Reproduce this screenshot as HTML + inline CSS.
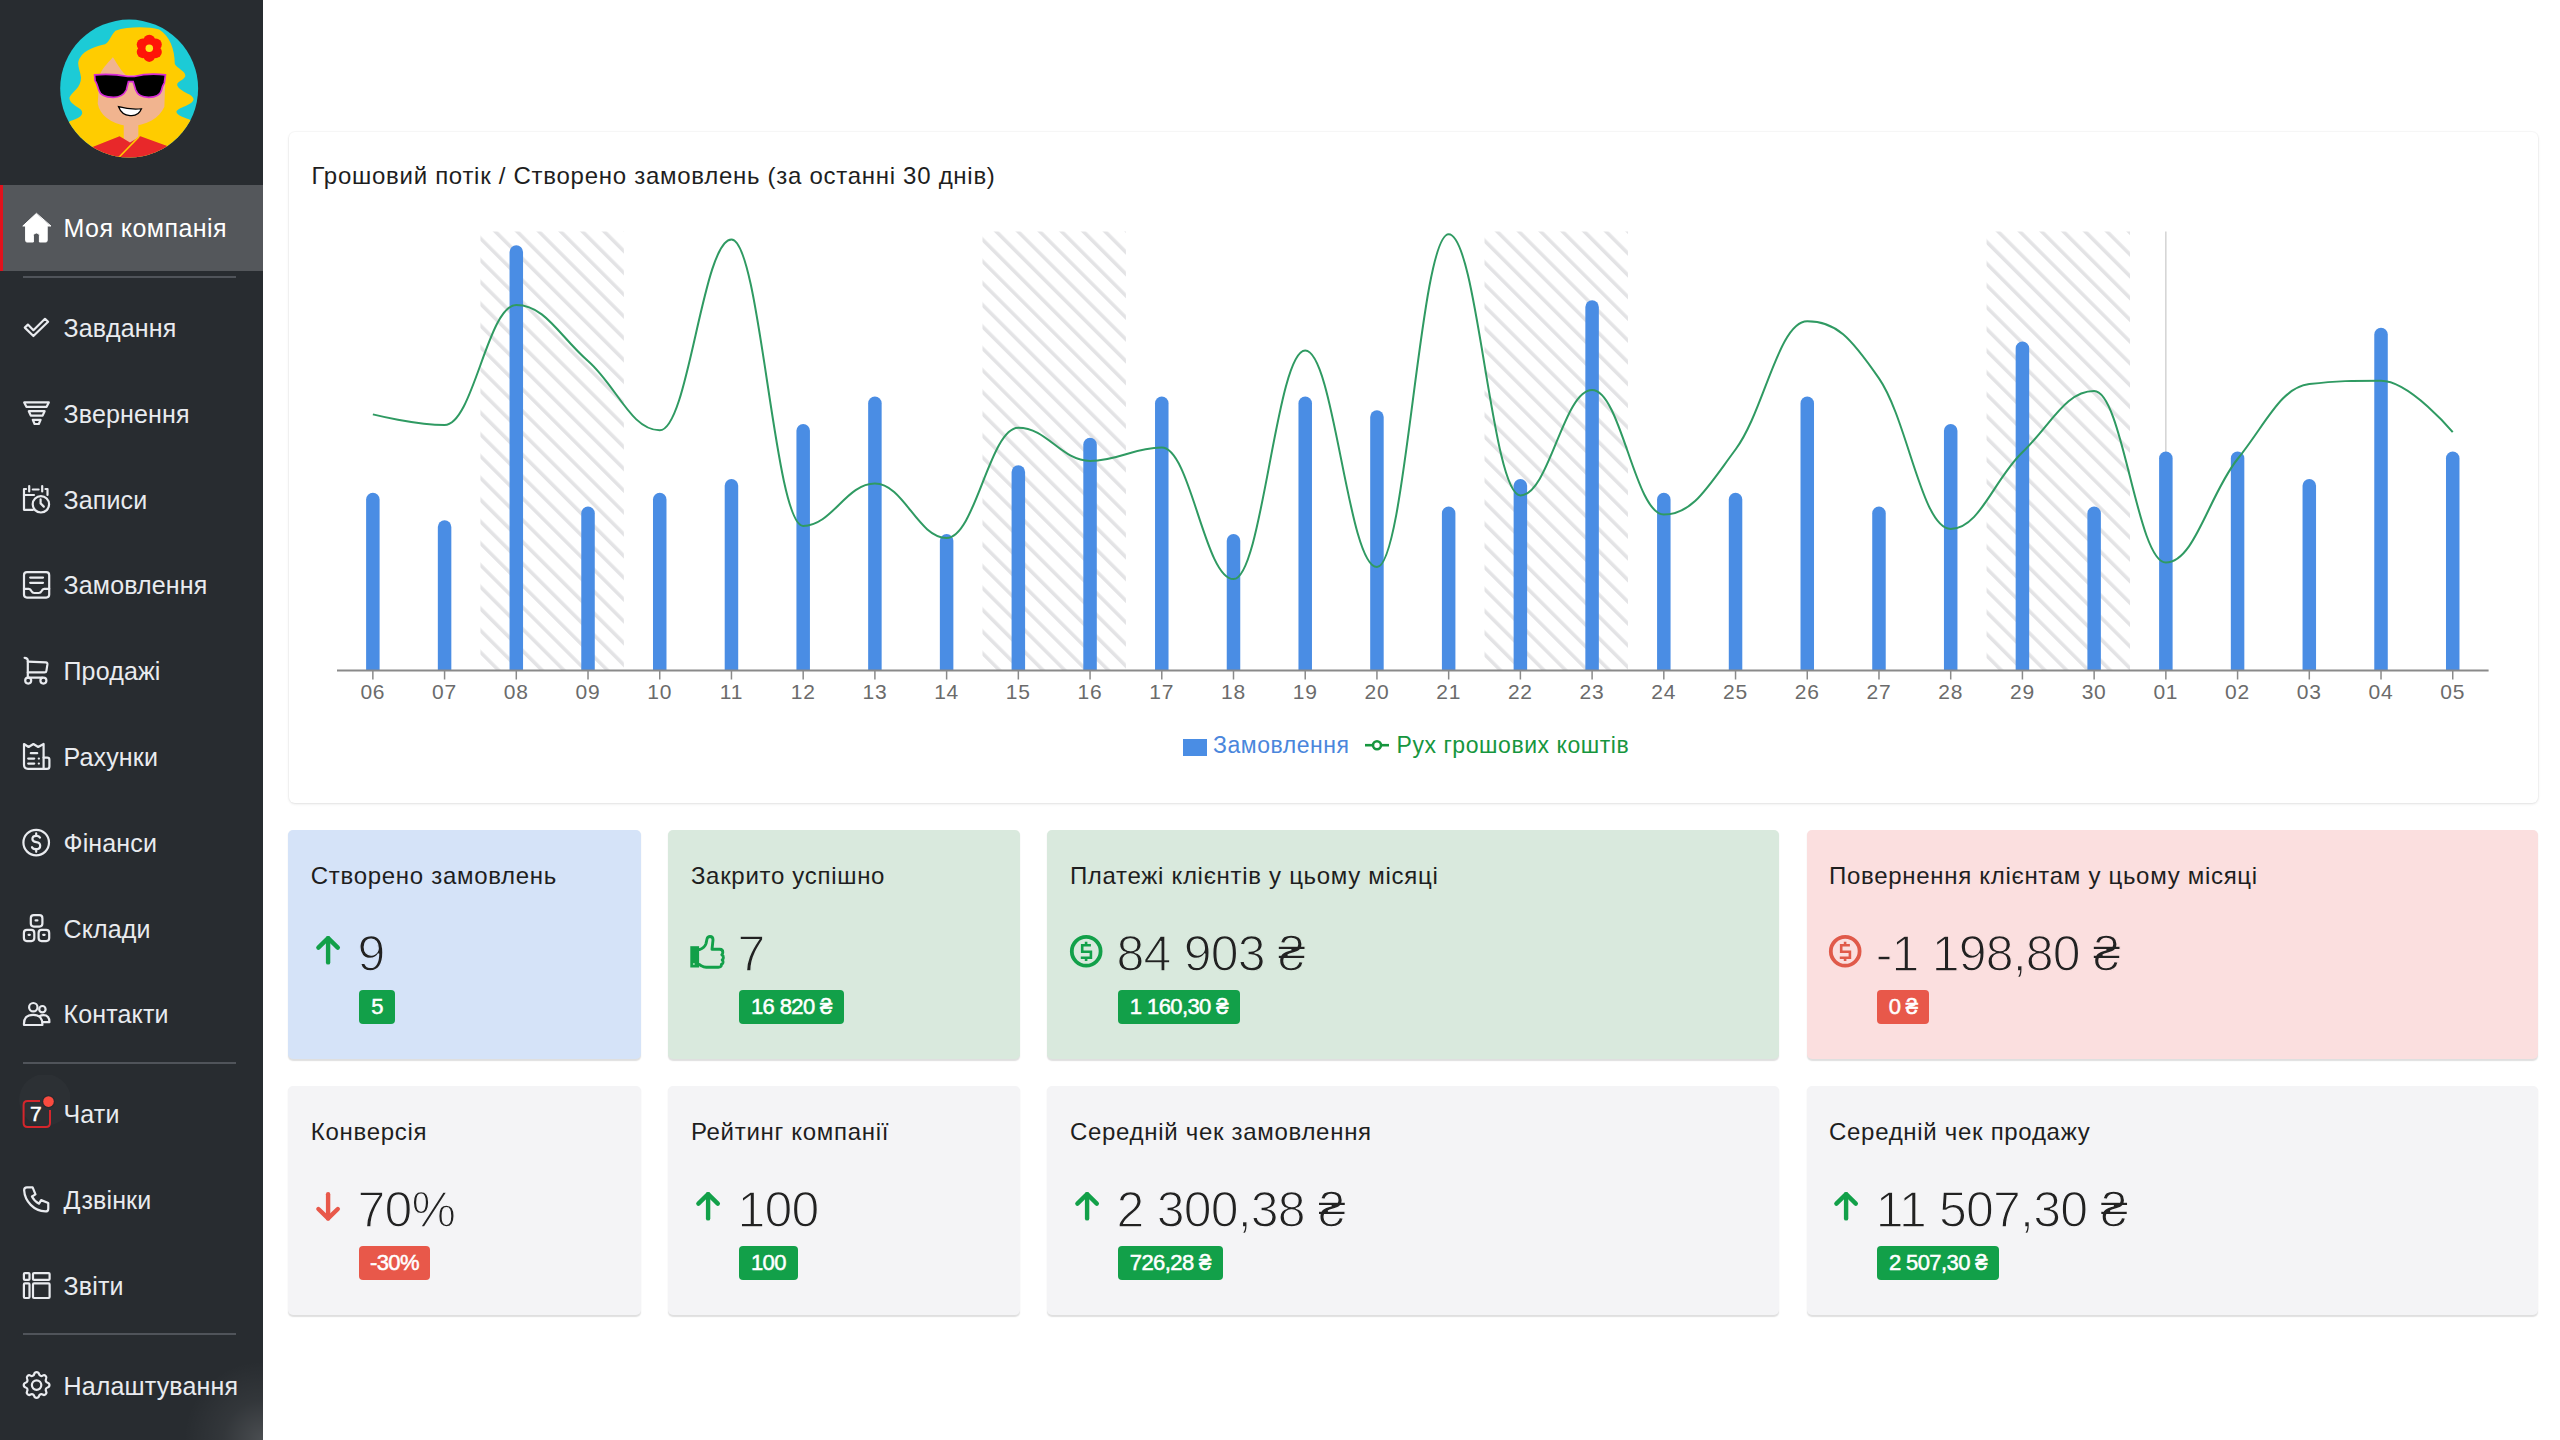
<!DOCTYPE html>
<html lang="uk"><head><meta charset="utf-8"><title>Dashboard</title><style>
*{box-sizing:border-box;margin:0;padding:0}
html,body{width:2560px;height:1440px;overflow:hidden;background:#fff;font-family:"Liberation Sans", sans-serif}
.sb{position:absolute;left:0;top:0;width:263px;height:1440px;background:#282c30;overflow:hidden}
.act{position:absolute;left:0;top:184.5px;width:263px;height:86.3px;background:#54575b;border-left:3px solid #e0121c}
.mi{position:absolute;left:63.5px;font-size:25px;line-height:30px;color:#e9ebef;white-space:nowrap;letter-spacing:0.15px}
.sep{position:absolute;left:23px;width:213px;height:1.6px;background:#50545a}
.ic{position:absolute}
.card{position:absolute;border-radius:6px}
.chartcard{left:288.5px;top:131.5px;width:2249px;height:671px;background:#fff;box-shadow:0 1px 3px rgba(0,0,0,0.10),0 0 0 1px rgba(0,0,0,0.025)}
.ctitle{position:absolute;left:311.5px;top:161px;font-size:24px;line-height:30px;color:#1e1e1e;letter-spacing:0.72px;white-space:nowrap}
.leg{position:absolute;top:730px;font-size:23px;line-height:30px;letter-spacing:0.55px;white-space:nowrap}
.st{position:absolute;border-radius:5px;box-shadow:0 1.5px 1.2px rgba(0,0,0,0.13)}
.t{position:absolute;font-size:24px;line-height:30px;color:#1e1e1e;letter-spacing:0.7px;white-space:nowrap}
.n{position:absolute;font-size:50px;line-height:60px;color:#222;letter-spacing:-0.8px;white-space:nowrap;-webkit-text-stroke:1.3px var(--bg)}
.b{position:absolute;height:34.5px;border-radius:4px;color:#fff;font-size:22px;font-weight:400;line-height:34.5px;letter-spacing:-0.6px;white-space:nowrap;text-align:center;-webkit-text-stroke:0.5px #fff}
.g{background:#12a049} .r{background:#e8584a}
</style></head><body>
<div class="sb">
<svg style="position:absolute;left:55px;top:15px" width="150" height="150" viewBox="0 0 1440 1440">
<defs><clipPath id="avc"><circle cx="712" cy="706" r="662"/></clipPath></defs>
<circle cx="712" cy="706" r="662" fill="#1ccbd6"/>
<g clip-path="url(#avc)">
<path d="M580,150 C700,110 900,110 1000,140 C1100,200 1150,330 1150,470 C1180,520 1260,540 1250,590 C1230,630 1160,640 1175,680 C1200,740 1330,760 1330,810 C1320,870 1180,880 1165,930 C1180,980 1300,990 1310,1020 L1500,1500 L-100,1500 L140,1020 C250,990 280,950 250,910 C200,870 130,840 140,790 C170,730 250,700 250,600 C240,520 200,470 240,410 C280,330 400,300 480,280 C520,260 540,190 580,150 Z" fill="#ffcc00"/>
<path d="M555,405 C500,470 440,520 425,600 L410,850 C430,960 530,1040 690,1065 C880,1070 1000,990 1050,880 L1060,580 L680,575 C620,520 590,450 555,405 Z" fill="#f1b48f"/>
<rect x="660" y="1000" width="140" height="230" fill="#f1b48f"/>
<path d="M330,1280 L620,1165 L720,1225 L820,1165 L1110,1270 L1200,1500 L300,1500 Z" fill="#e8282a"/>
<path d="M805,1170 L600,1380" stroke="#ffcc00" stroke-width="14"/>
</g>
<path d="M380,575 Q540,560 700,590 L760,590 Q900,555 1060,575 L1050,650 Q1030,680 1020,730 Q1000,790 900,790 Q800,790 775,720 L750,640 L705,640 L685,720 Q650,790 560,790 Q440,790 420,720 Q400,650 385,630 Z" fill="#000" stroke="#d62ad6" stroke-width="16"/>
<path d="M610,880 Q720,910 830,900 Q800,975 720,965 Q640,960 610,880 Z" fill="#fff" stroke="#000" stroke-width="12"/>
<circle cx="967.4" cy="356.0" r="58" fill="#ff1408"/><circle cx="905.0" cy="392.0" r="58" fill="#ff1408"/><circle cx="842.6" cy="356.0" r="58" fill="#ff1408"/><circle cx="842.6" cy="284.0" r="58" fill="#ff1408"/><circle cx="905.0" cy="248.0" r="58" fill="#ff1408"/><circle cx="967.4" cy="284.0" r="58" fill="#ff1408"/>
<circle cx="905" cy="320" r="36" fill="#ffe51a"/>
</svg>
<div class="act"></div>
<div style="position:absolute;left:183px;top:1360px;width:160px;height:160px;border-radius:50%;background:radial-gradient(circle at center, rgba(255,255,255,0.16) 0%, rgba(255,255,255,0.05) 35%, rgba(255,255,255,0) 70%)"></div>
<div class="mi" style="top:212.9px;color:#fff;letter-spacing:0.45px">Моя компанія</div>
<svg class="ic" style="left:15px;top:205px" width="45" height="45" viewBox="15 205 45 45" fill="none" stroke="#e9ebef" stroke-width="2.2" stroke-linejoin="round" stroke-linecap="round"><path d="M36.2,213.6 L22.8,226 L25.6,226 L25.6,240.6 Q25.6,242 27,242 L33.4,242 L33.4,235.5 Q33.4,233 36.4,233 Q39.4,233 39.4,235.5 L39.4,242 L45.8,242 Q47.2,242 47.2,240.6 L47.2,226 L50.6,226 Z" fill="#ffffff" stroke="#ffffff" stroke-width="1"/></svg>
<div class="mi" style="top:313.0px;">Завдання</div>
<svg class="ic" style="left:15px;top:305px" width="45" height="45" viewBox="15 305 45 45" fill="none" stroke="#e9ebef" stroke-width="2.2" stroke-linejoin="round" stroke-linecap="round"><path d="M24.8,327.6 L27.9,324.6 L33.4,330.2 L45,318.8 L48.1,321.7 L33.4,336 Z"/></svg>
<div class="mi" style="top:398.8px;">Звернення</div>
<svg class="ic" style="left:15px;top:390px" width="45" height="45" viewBox="15 390 45 45" fill="none" stroke="#e9ebef" stroke-width="2.2" stroke-linejoin="round" stroke-linecap="round"><path d="M24.2,402.4 L48.8,402.4 L46.6,406.8 L26.4,406.8 Z"/><path d="M28.8,411.2 L44.6,411.2 L42.6,415.6 L30.8,415.6 Z"/><path d="M32.8,419.8 L40.6,419.8 L38.8,424 L34.6,424 Z"/></svg>
<div class="mi" style="top:484.6px;">Записи</div>
<svg class="ic" style="left:15px;top:475px" width="45" height="45" viewBox="15 475 45 45" fill="none" stroke="#e9ebef" stroke-width="2.2" stroke-linejoin="round" stroke-linecap="round"><path d="M26,489 L24,489 L24,509.8 L33,509.8"/><path d="M45.5,489 L47.5,489 L47.5,495"/><path d="M24,495 L34,495"/><path d="M29.2,486 L29.2,491.5"/><path d="M42.2,486 L42.2,491.5"/><path d="M32.8,489.5 L38.6,489.5"/><circle cx="40.9" cy="504.3" r="8.2"/><path d="M40.6,499.4 L40.6,503.4 L43.8,506.6"/></svg>
<div class="mi" style="top:570.4px;">Замовлення</div>
<svg class="ic" style="left:15px;top:562px" width="45" height="45" viewBox="15 562 45 45" fill="none" stroke="#e9ebef" stroke-width="2.2" stroke-linejoin="round" stroke-linecap="round"><rect x="24" y="572.2" width="25.2" height="25.4" rx="3"/><path d="M30.2,577.6 L43,577.6"/><path d="M30.2,582.8 L43,582.8"/><path d="M24,588.8 L28.8,588.8 Q30.4,588.8 31.4,591 Q32.4,593 34.2,593 L38.8,593 Q40.6,593 41.6,591 Q42.6,588.8 44.2,588.8 L49.2,588.8"/></svg>
<div class="mi" style="top:656.2px;">Продажі</div>
<svg class="ic" style="left:15px;top:648px" width="45" height="45" viewBox="15 648 45 45" fill="none" stroke="#e9ebef" stroke-width="2.2" stroke-linejoin="round" stroke-linecap="round"><path d="M24.6,657.8 Q27.6,657.8 27.8,660.4 L27.8,677.6"/><path d="M27.8,661.6 L45.8,662.4 Q47.6,662.6 47.4,664.4 L46.4,670.8 Q46.2,672.4 44.6,672.4 L27.8,672.4"/><path d="M27.8,677.6 L42.2,677.6"/><circle cx="28.2" cy="680.6" r="3"/><circle cx="43.4" cy="680.6" r="3"/></svg>
<div class="mi" style="top:742.0px;">Рахунки</div>
<svg class="ic" style="left:15px;top:733px" width="45" height="45" viewBox="15 733 45 45" fill="none" stroke="#e9ebef" stroke-width="2.2" stroke-linejoin="round" stroke-linecap="round"><path d="M24,744 L28.6,747 L33.4,744 L38.2,747 L43.6,744 L43.6,768.8 L28,768.8 Q24,768.8 24,764.8 Z"/><path d="M43.6,757.6 L47.2,757.6 Q49.4,757.6 49.4,759.8 L49.4,766.4 Q49.4,768.8 47,768.8 L43.6,768.8"/><path d="M30.8,753.2 L37.2,753.2"/><path d="M28.2,758.6 L34.2,758.6"/><path d="M28.2,763.6 L34.2,763.6"/><path d="M38.8,758.6 L38.9,758.6"/><path d="M38.8,763.6 L38.9,763.6"/></svg>
<div class="mi" style="top:827.8px;">Фінанси</div>
<svg class="ic" style="left:15px;top:820px" width="45" height="45" viewBox="15 820 45 45" fill="none" stroke="#e9ebef" stroke-width="2.2" stroke-linejoin="round" stroke-linecap="round"><circle cx="36.2" cy="842.6" r="12.8"/><path d="M40,837.6 Q39,835.8 36.2,835.8 Q32.4,835.8 32.4,839 Q32.4,841.6 36.2,842.2 Q40.2,842.8 40.2,845.8 Q40.2,849.2 36.2,849.2 Q33,849.2 32,847.2"/><path d="M36.2,833.4 L36.2,835.8"/><path d="M36.2,849.2 L36.2,851.8"/></svg>
<div class="mi" style="top:913.6px;">Склади</div>
<svg class="ic" style="left:15px;top:905px" width="45" height="45" viewBox="15 905 45 45" fill="none" stroke="#e9ebef" stroke-width="2.2" stroke-linejoin="round" stroke-linecap="round"><rect x="30.8" y="915.2" width="11.6" height="11.4" rx="3"/><rect x="23.9" y="929.9" width="10.4" height="11.2" rx="3"/><rect x="38.6" y="929.9" width="10.6" height="11.2" rx="3"/><path d="M35.6,920.4 L37.4,920.4"/><path d="M28.6,934.8 L29.8,934.8"/><path d="M43.2,934.8 L44.6,934.8"/></svg>
<div class="mi" style="top:999.4px;">Контакти</div>
<svg class="ic" style="left:15px;top:990px" width="45" height="45" viewBox="15 990 45 45" fill="none" stroke="#e9ebef" stroke-width="2.2" stroke-linejoin="round" stroke-linecap="round"><circle cx="33.3" cy="1007.2" r="4.2"/><circle cx="42.4" cy="1009.2" r="3.2"/><path d="M24,1025 Q23.4,1014.8 33.2,1014.8 Q42.6,1014.8 42.4,1025 Z"/><path d="M39.6,1016.2 Q41.2,1015.2 43.4,1015.2 Q49.6,1015.2 49.4,1022.2 L43,1022.2"/></svg>
<div class="mi" style="top:1099.2px;">Чати</div>
<svg class="ic" style="left:10px;top:1075px" width="60" height="60" viewBox="10 1075 60 60"><circle cx="45" cy="1100" r="26" fill="#ffffff" fill-opacity="0.018"/><path d="M40,1101 L27.5,1101 Q23.6,1101 23.6,1105 L23.6,1123 Q23.6,1127 27.5,1127 L46,1127 Q50,1127 50,1123 L50,1110" fill="none" stroke="#d4262c" stroke-width="2"/><circle cx="48.5" cy="1101.6" r="6.6" fill="#272a2f"/><circle cx="48.5" cy="1101.6" r="5.3" fill="#f94b3f"/><text x="35.8" y="1121.4" text-anchor="middle" font-family="Liberation Sans" font-size="21" fill="#ffffff" stroke="#ffffff" stroke-width="0.5">7</text></svg>
<div class="mi" style="top:1185.0px;">Дзвінки</div>
<svg class="ic" style="left:15px;top:1175px" width="45" height="45" viewBox="15 1175 45 45" fill="none" stroke="#e9ebef" stroke-width="2.2" stroke-linejoin="round" stroke-linecap="round"><g transform="translate(19.86,1181.65) scale(1.42)" stroke-width="1.55"><path d="M5 4h4l2 5l-2.5 1.5a11 11 0 0 0 5 5l1.5 -2.5l5 2v4a2 2 0 0 1 -2 2a16 16 0 0 1 -15 -15a2 2 0 0 1 2 -2"/></g></svg>
<div class="mi" style="top:1270.8px;">Звіти</div>
<svg class="ic" style="left:15px;top:1262px" width="45" height="45" viewBox="15 1262 45 45" fill="none" stroke="#e9ebef" stroke-width="2.2" stroke-linejoin="round" stroke-linecap="round"><rect x="23.9" y="1273.1" width="5.6" height="6.8" rx="1"/><rect x="33" y="1273.1" width="16.6" height="6.8" rx="1"/><rect x="23.9" y="1283.4" width="5.6" height="14.6" rx="1"/><rect x="33" y="1283.4" width="16.6" height="14.6" rx="1"/></svg>
<div class="mi" style="top:1370.6px;">Налаштування</div>
<svg class="ic" style="left:15px;top:1362px" width="45" height="45" viewBox="15 1362 45 45" fill="none" stroke="#e9ebef" stroke-width="2.2" stroke-linejoin="round" stroke-linecap="round"><g transform="translate(19.44,1367.94) scale(1.43)" stroke-width="1.55"><path d="M10.325 4.317c.426 -1.756 2.924 -1.756 3.35 0a1.724 1.724 0 0 0 2.573 1.066c1.543 -.94 3.310 .826 2.370 2.370a1.724 1.724 0 0 0 1.065 2.572c1.756 .426 1.756 2.924 0 3.350a1.724 1.724 0 0 0 -1.066 2.573c.940 1.543 -.826 3.310 -2.370 2.370a1.724 1.724 0 0 0 -2.572 1.065c-.426 1.756 -2.924 1.756 -3.350 0a1.724 1.724 0 0 0 -2.573 -1.066c-1.543 .940 -3.310 -.826 -2.370 -2.370a1.724 1.724 0 0 0 -1.065 -2.572c-1.756 -.426 -1.756 -2.924 0 -3.350a1.724 1.724 0 0 0 1.066 -2.573c-.940 -1.543 .826 -3.310 2.370 -2.370c1 .608 2.296 .070 2.572 -1.065z"/><path d="M8.7 12a3.3 3.3 0 1 0 6.6 0a3.3 3.3 0 0 0 -6.6 0"/></g></svg>
<div class="sep" style="top:276px"></div>
<div class="sep" style="top:1062px"></div>
<div class="sep" style="top:1333px"></div>
</div>
<div class="card chartcard">
<div style="position:absolute;left:0;top:0;width:2249px;height:671px;overflow:hidden"><svg width="2249" height="671" viewBox="288.5 131.5 2249 671" style="position:absolute;left:0;top:0">
<defs><pattern id="hp" patternUnits="userSpaceOnUse" width="15.4" height="15.4" patternTransform="rotate(-45)"><rect x="0" y="0" width="3.5" height="15.4" fill="#e3e3e5"/></pattern></defs>
<rect x="479.94" y="231" width="143.44" height="439" fill="url(#hp)"/>
<rect x="981.98" y="231" width="143.44" height="439" fill="url(#hp)"/>
<rect x="1484.02" y="231" width="143.44" height="439" fill="url(#hp)"/>
<rect x="1986.06" y="231" width="143.44" height="439" fill="url(#hp)"/>
<line x1="2165.36" y1="231" x2="2165.36" y2="670" stroke="#c8c8c8" stroke-width="1.2"/>
<path d="M365.61,670 L365.61,499.00 A6.75,6.75 0 0 1 379.11,499.00 L379.11,670 Z" fill="#4a8de4"/>
<path d="M437.33,670 L437.33,526.50 A6.75,6.75 0 0 1 450.83,526.50 L450.83,670 Z" fill="#4a8de4"/>
<path d="M509.05,670 L509.05,251.50 A6.75,6.75 0 0 1 522.55,251.50 L522.55,670 Z" fill="#4a8de4"/>
<path d="M580.77,670 L580.77,512.75 A6.75,6.75 0 0 1 594.27,512.75 L594.27,670 Z" fill="#4a8de4"/>
<path d="M652.49,670 L652.49,499.00 A6.75,6.75 0 0 1 665.99,499.00 L665.99,670 Z" fill="#4a8de4"/>
<path d="M724.21,670 L724.21,485.25 A6.75,6.75 0 0 1 737.71,485.25 L737.71,670 Z" fill="#4a8de4"/>
<path d="M795.93,670 L795.93,430.25 A6.75,6.75 0 0 1 809.43,430.25 L809.43,670 Z" fill="#4a8de4"/>
<path d="M867.65,670 L867.65,402.75 A6.75,6.75 0 0 1 881.15,402.75 L881.15,670 Z" fill="#4a8de4"/>
<path d="M939.37,670 L939.37,540.25 A6.75,6.75 0 0 1 952.87,540.25 L952.87,670 Z" fill="#4a8de4"/>
<path d="M1011.09,670 L1011.09,471.50 A6.75,6.75 0 0 1 1024.59,471.50 L1024.59,670 Z" fill="#4a8de4"/>
<path d="M1082.81,670 L1082.81,444.00 A6.75,6.75 0 0 1 1096.31,444.00 L1096.31,670 Z" fill="#4a8de4"/>
<path d="M1154.53,670 L1154.53,402.75 A6.75,6.75 0 0 1 1168.03,402.75 L1168.03,670 Z" fill="#4a8de4"/>
<path d="M1226.25,670 L1226.25,540.25 A6.75,6.75 0 0 1 1239.75,540.25 L1239.75,670 Z" fill="#4a8de4"/>
<path d="M1297.97,670 L1297.97,402.75 A6.75,6.75 0 0 1 1311.47,402.75 L1311.47,670 Z" fill="#4a8de4"/>
<path d="M1369.69,670 L1369.69,416.50 A6.75,6.75 0 0 1 1383.19,416.50 L1383.19,670 Z" fill="#4a8de4"/>
<path d="M1441.41,670 L1441.41,512.75 A6.75,6.75 0 0 1 1454.91,512.75 L1454.91,670 Z" fill="#4a8de4"/>
<path d="M1513.13,670 L1513.13,485.25 A6.75,6.75 0 0 1 1526.63,485.25 L1526.63,670 Z" fill="#4a8de4"/>
<path d="M1584.85,670 L1584.85,306.50 A6.75,6.75 0 0 1 1598.35,306.50 L1598.35,670 Z" fill="#4a8de4"/>
<path d="M1656.57,670 L1656.57,499.00 A6.75,6.75 0 0 1 1670.07,499.00 L1670.07,670 Z" fill="#4a8de4"/>
<path d="M1728.29,670 L1728.29,499.00 A6.75,6.75 0 0 1 1741.79,499.00 L1741.79,670 Z" fill="#4a8de4"/>
<path d="M1800.01,670 L1800.01,402.75 A6.75,6.75 0 0 1 1813.51,402.75 L1813.51,670 Z" fill="#4a8de4"/>
<path d="M1871.73,670 L1871.73,512.75 A6.75,6.75 0 0 1 1885.23,512.75 L1885.23,670 Z" fill="#4a8de4"/>
<path d="M1943.45,670 L1943.45,430.25 A6.75,6.75 0 0 1 1956.95,430.25 L1956.95,670 Z" fill="#4a8de4"/>
<path d="M2015.17,670 L2015.17,347.75 A6.75,6.75 0 0 1 2028.67,347.75 L2028.67,670 Z" fill="#4a8de4"/>
<path d="M2086.89,670 L2086.89,512.75 A6.75,6.75 0 0 1 2100.39,512.75 L2100.39,670 Z" fill="#4a8de4"/>
<path d="M2158.61,670 L2158.61,457.75 A6.75,6.75 0 0 1 2172.11,457.75 L2172.11,670 Z" fill="#4a8de4"/>
<path d="M2230.33,670 L2230.33,457.75 A6.75,6.75 0 0 1 2243.83,457.75 L2243.83,670 Z" fill="#4a8de4"/>
<path d="M2302.05,670 L2302.05,485.25 A6.75,6.75 0 0 1 2315.55,485.25 L2315.55,670 Z" fill="#4a8de4"/>
<path d="M2373.77,670 L2373.77,334.00 A6.75,6.75 0 0 1 2387.27,334.00 L2387.27,670 Z" fill="#4a8de4"/>
<path d="M2445.49,670 L2445.49,457.75 A6.75,6.75 0 0 1 2458.99,457.75 L2458.99,670 Z" fill="#4a8de4"/>
<line x1="336.5" y1="670" x2="2488.10" y2="670" stroke="#8a8a8a" stroke-width="2"/>
<line x1="372.36" y1="670" x2="372.36" y2="679" stroke="#8a8a8a" stroke-width="1.5"/>
<line x1="444.08" y1="670" x2="444.08" y2="679" stroke="#8a8a8a" stroke-width="1.5"/>
<line x1="515.80" y1="670" x2="515.80" y2="679" stroke="#8a8a8a" stroke-width="1.5"/>
<line x1="587.52" y1="670" x2="587.52" y2="679" stroke="#8a8a8a" stroke-width="1.5"/>
<line x1="659.24" y1="670" x2="659.24" y2="679" stroke="#8a8a8a" stroke-width="1.5"/>
<line x1="730.96" y1="670" x2="730.96" y2="679" stroke="#8a8a8a" stroke-width="1.5"/>
<line x1="802.68" y1="670" x2="802.68" y2="679" stroke="#8a8a8a" stroke-width="1.5"/>
<line x1="874.40" y1="670" x2="874.40" y2="679" stroke="#8a8a8a" stroke-width="1.5"/>
<line x1="946.12" y1="670" x2="946.12" y2="679" stroke="#8a8a8a" stroke-width="1.5"/>
<line x1="1017.84" y1="670" x2="1017.84" y2="679" stroke="#8a8a8a" stroke-width="1.5"/>
<line x1="1089.56" y1="670" x2="1089.56" y2="679" stroke="#8a8a8a" stroke-width="1.5"/>
<line x1="1161.28" y1="670" x2="1161.28" y2="679" stroke="#8a8a8a" stroke-width="1.5"/>
<line x1="1233.00" y1="670" x2="1233.00" y2="679" stroke="#8a8a8a" stroke-width="1.5"/>
<line x1="1304.72" y1="670" x2="1304.72" y2="679" stroke="#8a8a8a" stroke-width="1.5"/>
<line x1="1376.44" y1="670" x2="1376.44" y2="679" stroke="#8a8a8a" stroke-width="1.5"/>
<line x1="1448.16" y1="670" x2="1448.16" y2="679" stroke="#8a8a8a" stroke-width="1.5"/>
<line x1="1519.88" y1="670" x2="1519.88" y2="679" stroke="#8a8a8a" stroke-width="1.5"/>
<line x1="1591.60" y1="670" x2="1591.60" y2="679" stroke="#8a8a8a" stroke-width="1.5"/>
<line x1="1663.32" y1="670" x2="1663.32" y2="679" stroke="#8a8a8a" stroke-width="1.5"/>
<line x1="1735.04" y1="670" x2="1735.04" y2="679" stroke="#8a8a8a" stroke-width="1.5"/>
<line x1="1806.76" y1="670" x2="1806.76" y2="679" stroke="#8a8a8a" stroke-width="1.5"/>
<line x1="1878.48" y1="670" x2="1878.48" y2="679" stroke="#8a8a8a" stroke-width="1.5"/>
<line x1="1950.20" y1="670" x2="1950.20" y2="679" stroke="#8a8a8a" stroke-width="1.5"/>
<line x1="2021.92" y1="670" x2="2021.92" y2="679" stroke="#8a8a8a" stroke-width="1.5"/>
<line x1="2093.64" y1="670" x2="2093.64" y2="679" stroke="#8a8a8a" stroke-width="1.5"/>
<line x1="2165.36" y1="670" x2="2165.36" y2="679" stroke="#8a8a8a" stroke-width="1.5"/>
<line x1="2237.08" y1="670" x2="2237.08" y2="679" stroke="#8a8a8a" stroke-width="1.5"/>
<line x1="2308.80" y1="670" x2="2308.80" y2="679" stroke="#8a8a8a" stroke-width="1.5"/>
<line x1="2380.52" y1="670" x2="2380.52" y2="679" stroke="#8a8a8a" stroke-width="1.5"/>
<line x1="2452.24" y1="670" x2="2452.24" y2="679" stroke="#8a8a8a" stroke-width="1.5"/>
<path d="M372.36,413.90 C372.36,413.90 415.39,424.50 444.08,424.50 C472.77,424.50 487.11,304.50 515.80,304.50 C544.49,304.50 558.83,335.44 587.52,360.50 C616.21,385.56 630.55,429.80 659.24,429.80 C687.93,429.80 702.27,239.10 730.96,239.10 C759.65,239.10 773.99,525.40 802.68,525.40 C831.37,525.40 845.71,483.00 874.40,483.00 C903.09,483.00 917.43,537.40 946.12,537.40 C974.81,537.40 989.15,427.20 1017.84,427.20 C1046.53,427.20 1060.87,460.40 1089.56,460.40 C1118.25,460.40 1132.59,447.10 1161.28,447.10 C1189.97,447.10 1204.31,578.60 1233.00,578.60 C1261.69,578.60 1276.03,350.10 1304.72,350.10 C1333.41,350.10 1347.75,566.60 1376.44,566.60 C1405.13,566.60 1419.47,233.80 1448.16,233.80 C1476.85,233.80 1491.19,494.90 1519.88,494.90 C1548.57,494.90 1562.91,389.50 1591.60,389.50 C1620.29,389.50 1634.63,514.00 1663.32,514.00 C1692.01,514.00 1706.35,487.64 1735.04,449.00 C1763.73,410.36 1778.07,320.80 1806.76,320.80 C1835.45,320.80 1849.79,336.38 1878.48,377.90 C1907.17,419.42 1921.51,528.40 1950.20,528.40 C1978.89,528.40 1993.23,479.36 2021.92,451.80 C2050.61,424.24 2064.95,390.60 2093.64,390.60 C2122.33,390.60 2136.67,562.00 2165.36,562.00 C2194.05,562.00 2208.39,494.18 2237.08,458.50 C2265.77,422.82 2280.11,387.00 2308.80,383.60 C2337.49,380.20 2351.83,380.20 2380.52,380.20 C2409.21,380.20 2452.24,431.60 2452.24,431.60" fill="none" stroke="#2f9a62" stroke-width="2"/>
<text x="372.36" y="698" text-anchor="middle" font-family="Liberation Sans" font-size="21" letter-spacing="0.8" fill="#6b6b6b">06</text>
<text x="444.08" y="698" text-anchor="middle" font-family="Liberation Sans" font-size="21" letter-spacing="0.8" fill="#6b6b6b">07</text>
<text x="515.80" y="698" text-anchor="middle" font-family="Liberation Sans" font-size="21" letter-spacing="0.8" fill="#6b6b6b">08</text>
<text x="587.52" y="698" text-anchor="middle" font-family="Liberation Sans" font-size="21" letter-spacing="0.8" fill="#6b6b6b">09</text>
<text x="659.24" y="698" text-anchor="middle" font-family="Liberation Sans" font-size="21" letter-spacing="0.8" fill="#6b6b6b">10</text>
<text x="730.96" y="698" text-anchor="middle" font-family="Liberation Sans" font-size="21" letter-spacing="0.8" fill="#6b6b6b">11</text>
<text x="802.68" y="698" text-anchor="middle" font-family="Liberation Sans" font-size="21" letter-spacing="0.8" fill="#6b6b6b">12</text>
<text x="874.40" y="698" text-anchor="middle" font-family="Liberation Sans" font-size="21" letter-spacing="0.8" fill="#6b6b6b">13</text>
<text x="946.12" y="698" text-anchor="middle" font-family="Liberation Sans" font-size="21" letter-spacing="0.8" fill="#6b6b6b">14</text>
<text x="1017.84" y="698" text-anchor="middle" font-family="Liberation Sans" font-size="21" letter-spacing="0.8" fill="#6b6b6b">15</text>
<text x="1089.56" y="698" text-anchor="middle" font-family="Liberation Sans" font-size="21" letter-spacing="0.8" fill="#6b6b6b">16</text>
<text x="1161.28" y="698" text-anchor="middle" font-family="Liberation Sans" font-size="21" letter-spacing="0.8" fill="#6b6b6b">17</text>
<text x="1233.00" y="698" text-anchor="middle" font-family="Liberation Sans" font-size="21" letter-spacing="0.8" fill="#6b6b6b">18</text>
<text x="1304.72" y="698" text-anchor="middle" font-family="Liberation Sans" font-size="21" letter-spacing="0.8" fill="#6b6b6b">19</text>
<text x="1376.44" y="698" text-anchor="middle" font-family="Liberation Sans" font-size="21" letter-spacing="0.8" fill="#6b6b6b">20</text>
<text x="1448.16" y="698" text-anchor="middle" font-family="Liberation Sans" font-size="21" letter-spacing="0.8" fill="#6b6b6b">21</text>
<text x="1519.88" y="698" text-anchor="middle" font-family="Liberation Sans" font-size="21" letter-spacing="0.8" fill="#6b6b6b">22</text>
<text x="1591.60" y="698" text-anchor="middle" font-family="Liberation Sans" font-size="21" letter-spacing="0.8" fill="#6b6b6b">23</text>
<text x="1663.32" y="698" text-anchor="middle" font-family="Liberation Sans" font-size="21" letter-spacing="0.8" fill="#6b6b6b">24</text>
<text x="1735.04" y="698" text-anchor="middle" font-family="Liberation Sans" font-size="21" letter-spacing="0.8" fill="#6b6b6b">25</text>
<text x="1806.76" y="698" text-anchor="middle" font-family="Liberation Sans" font-size="21" letter-spacing="0.8" fill="#6b6b6b">26</text>
<text x="1878.48" y="698" text-anchor="middle" font-family="Liberation Sans" font-size="21" letter-spacing="0.8" fill="#6b6b6b">27</text>
<text x="1950.20" y="698" text-anchor="middle" font-family="Liberation Sans" font-size="21" letter-spacing="0.8" fill="#6b6b6b">28</text>
<text x="2021.92" y="698" text-anchor="middle" font-family="Liberation Sans" font-size="21" letter-spacing="0.8" fill="#6b6b6b">29</text>
<text x="2093.64" y="698" text-anchor="middle" font-family="Liberation Sans" font-size="21" letter-spacing="0.8" fill="#6b6b6b">30</text>
<text x="2165.36" y="698" text-anchor="middle" font-family="Liberation Sans" font-size="21" letter-spacing="0.8" fill="#6b6b6b">01</text>
<text x="2237.08" y="698" text-anchor="middle" font-family="Liberation Sans" font-size="21" letter-spacing="0.8" fill="#6b6b6b">02</text>
<text x="2308.80" y="698" text-anchor="middle" font-family="Liberation Sans" font-size="21" letter-spacing="0.8" fill="#6b6b6b">03</text>
<text x="2380.52" y="698" text-anchor="middle" font-family="Liberation Sans" font-size="21" letter-spacing="0.8" fill="#6b6b6b">04</text>
<text x="2452.24" y="698" text-anchor="middle" font-family="Liberation Sans" font-size="21" letter-spacing="0.8" fill="#6b6b6b">05</text>
</svg></div>
</div>
<div class="ctitle">Грошовий потік / Створено замовлень (за останні 30 днів)</div>
<div style="position:absolute;left:1183.4px;top:738.7px;width:24px;height:17.6px;background:#4a8de4"></div>
<div class="leg" style="left:1213px;color:#4a86dc">Замовлення</div>
<svg style="position:absolute;left:1363px;top:735px" width="30" height="20" viewBox="0 0 30 20"><path d="M2,10.2 L26,10.2" stroke="#16963e" stroke-width="2.6"/><circle cx="14" cy="10.2" r="4" fill="#fff" stroke="#16963e" stroke-width="2.6"/></svg>
<div class="leg" style="left:1396.5px;color:#16963e">Рух грошових коштів</div>
<div class="st" style="left:288.3px;top:830.4px;width:352.4px;height:228.8px;background:#d5e3f8"></div>
<div class="t" style="left:310.8px;top:860.6px">Створено замовлень</div>
<div class="n" style="left:357.5px;top:924.0px;--bg:#d5e3f8">9</div>
<svg class="ic" style="left:300.0px;top:925.0px" width="50" height="50" viewBox="300 925 50 50" fill="none" stroke="#12a049" stroke-width="4.4" stroke-linecap="round" stroke-linejoin="round"><path d="M328.1,938.2 L328.1,962.4"/><path d="M318.4,947.6 L328.1,938.2 L337.8,947.6"/></svg>
<div class="b g" style="left:358.9px;top:989.9px;width:36.2px">5</div>
<div class="st" style="left:668.4px;top:830.4px;width:352.0px;height:228.8px;background:#d9e9dd"></div>
<div class="t" style="left:690.9px;top:860.6px">Закрито успішно</div>
<div class="n" style="left:737.6px;top:924.0px;--bg:#d9e9dd">7</div>
<svg class="ic" style="left:682.0px;top:925.0px" width="50" height="50" viewBox="682 925 50 50" fill="none" stroke="#12a049" stroke-width="2.9" stroke-linecap="round" stroke-linejoin="round"><rect x="690.3" y="946.2" width="8.8" height="21.3" fill="#12a049" stroke="none"/><circle cx="693.9" cy="964" r="1" fill="#9fe0b0" stroke="none"/><path d="M699.4,949.6 Q704.6,948 706,943.6 L707,939 Q707.6,936.5 710,936.5 Q713,936.6 713,939.8 L712,949.3 L719.8,949.3 Q722.8,949.4 722.8,952.2 Q722.8,953.8 721.8,954.8 Q723.6,955.8 723.4,957.8 Q723.2,959.2 722.2,960 Q723.4,961 723,962.6 Q722.6,964 721.4,964.4 Q721.6,967.3 718.4,967.3 L706.2,967.3 Q703.6,967.3 701.6,965.9 L699.4,964.6"/></svg>
<div class="b g" style="left:739.0px;top:989.9px;width:104.6px">16 820 ₴</div>
<div class="st" style="left:1047.4px;top:830.4px;width:731.9px;height:228.8px;background:#d9e9dd"></div>
<div class="t" style="left:1069.9px;top:860.6px">Платежі клієнтів у цьому місяці</div>
<div class="n" style="left:1116.6px;top:924.0px;--bg:#d9e9dd">84 903 ₴</div>
<svg class="ic" style="left:1062.0px;top:925.0px" width="50" height="50" viewBox="1062 925 50 50" fill="none" stroke="#12a049" stroke-width="3.8"><circle cx="1086.2" cy="951.3" r="14.4"/><path d="M1090.9,945.2 L1082.2,945.2 L1082.2,951.8 L1090.9,951.8 L1090.9,957.8 L1080.8,957.8" stroke-width="2.6"/><path d="M1086.1,941.8 L1086.1,945.2 M1086.1,957.8 L1086.1,960.9" stroke-width="2.6"/></svg>
<div class="b g" style="left:1118.0px;top:989.9px;width:121.7px">1 160,30 ₴</div>
<div class="st" style="left:1806.5px;top:830.4px;width:731.9px;height:228.8px;background:#fbdfdf"></div>
<div class="t" style="left:1829.0px;top:860.6px">Повернення клієнтам у цьому місяці</div>
<div class="n" style="left:1875.7px;top:924.0px;--bg:#fbdfdf">-1 198,80 ₴</div>
<svg class="ic" style="left:1821.1px;top:925.0px" width="50" height="50" viewBox="1062 925 50 50" fill="none" stroke="#e05a4a" stroke-width="3.8"><circle cx="1086.2" cy="951.3" r="14.4"/><path d="M1090.9,945.2 L1082.2,945.2 L1082.2,951.8 L1090.9,951.8 L1090.9,957.8 L1080.8,957.8" stroke-width="2.6"/><path d="M1086.1,941.8 L1086.1,945.2 M1086.1,957.8 L1086.1,960.9" stroke-width="2.6"/></svg>
<div class="b r" style="left:1877.1px;top:989.9px;width:52px">0 ₴</div>
<div class="st" style="left:288.3px;top:1086.4px;width:352.4px;height:228.8px;background:#f4f4f6"></div>
<div class="t" style="left:310.8px;top:1116.6px">Конверсія</div>
<div class="n" style="left:357.5px;top:1180.0px;--bg:#f4f4f6">70%</div>
<svg class="ic" style="left:300.0px;top:1181.0px" width="50" height="50" viewBox="300 925 50 50" fill="none" stroke="#e8584a" stroke-width="4.4" stroke-linecap="round" stroke-linejoin="round"><path d="M328.1,938.2 L328.1,962.4"/><path d="M318.4,953 L328.1,962.4 L337.8,953"/></svg>
<div class="b r" style="left:358.9px;top:1245.9px;width:71.2px">-30%</div>
<div class="st" style="left:668.4px;top:1086.4px;width:352.0px;height:228.8px;background:#f4f4f6"></div>
<div class="t" style="left:690.9px;top:1116.6px">Рейтинг компанії</div>
<div class="n" style="left:737.6px;top:1180.0px;--bg:#f4f4f6">100</div>
<svg class="ic" style="left:680.1px;top:1181.0px" width="50" height="50" viewBox="300 925 50 50" fill="none" stroke="#12a049" stroke-width="4.4" stroke-linecap="round" stroke-linejoin="round"><path d="M328.1,938.2 L328.1,962.4"/><path d="M318.4,947.6 L328.1,938.2 L337.8,947.6"/></svg>
<div class="b g" style="left:739.0px;top:1245.9px;width:58.8px">100</div>
<div class="st" style="left:1047.4px;top:1086.4px;width:731.9px;height:228.8px;background:#f4f4f6"></div>
<div class="t" style="left:1069.9px;top:1116.6px">Середній чек замовлення</div>
<div class="n" style="left:1116.6px;top:1180.0px;--bg:#f4f4f6">2 300,38 ₴</div>
<svg class="ic" style="left:1059.1px;top:1181.0px" width="50" height="50" viewBox="300 925 50 50" fill="none" stroke="#12a049" stroke-width="4.4" stroke-linecap="round" stroke-linejoin="round"><path d="M328.1,938.2 L328.1,962.4"/><path d="M318.4,947.6 L328.1,938.2 L337.8,947.6"/></svg>
<div class="b g" style="left:1118.0px;top:1245.9px;width:104.5px">726,28 ₴</div>
<div class="st" style="left:1806.5px;top:1086.4px;width:731.9px;height:228.8px;background:#f4f4f6"></div>
<div class="t" style="left:1829.0px;top:1116.6px">Середній чек продажу</div>
<div class="n" style="left:1875.7px;top:1180.0px;--bg:#f4f4f6">11 507,30 ₴</div>
<svg class="ic" style="left:1818.2px;top:1181.0px" width="50" height="50" viewBox="300 925 50 50" fill="none" stroke="#12a049" stroke-width="4.4" stroke-linecap="round" stroke-linejoin="round"><path d="M328.1,938.2 L328.1,962.4"/><path d="M318.4,947.6 L328.1,938.2 L337.8,947.6"/></svg>
<div class="b g" style="left:1877.1px;top:1245.9px;width:121.7px">2 507,30 ₴</div>
</body></html>
